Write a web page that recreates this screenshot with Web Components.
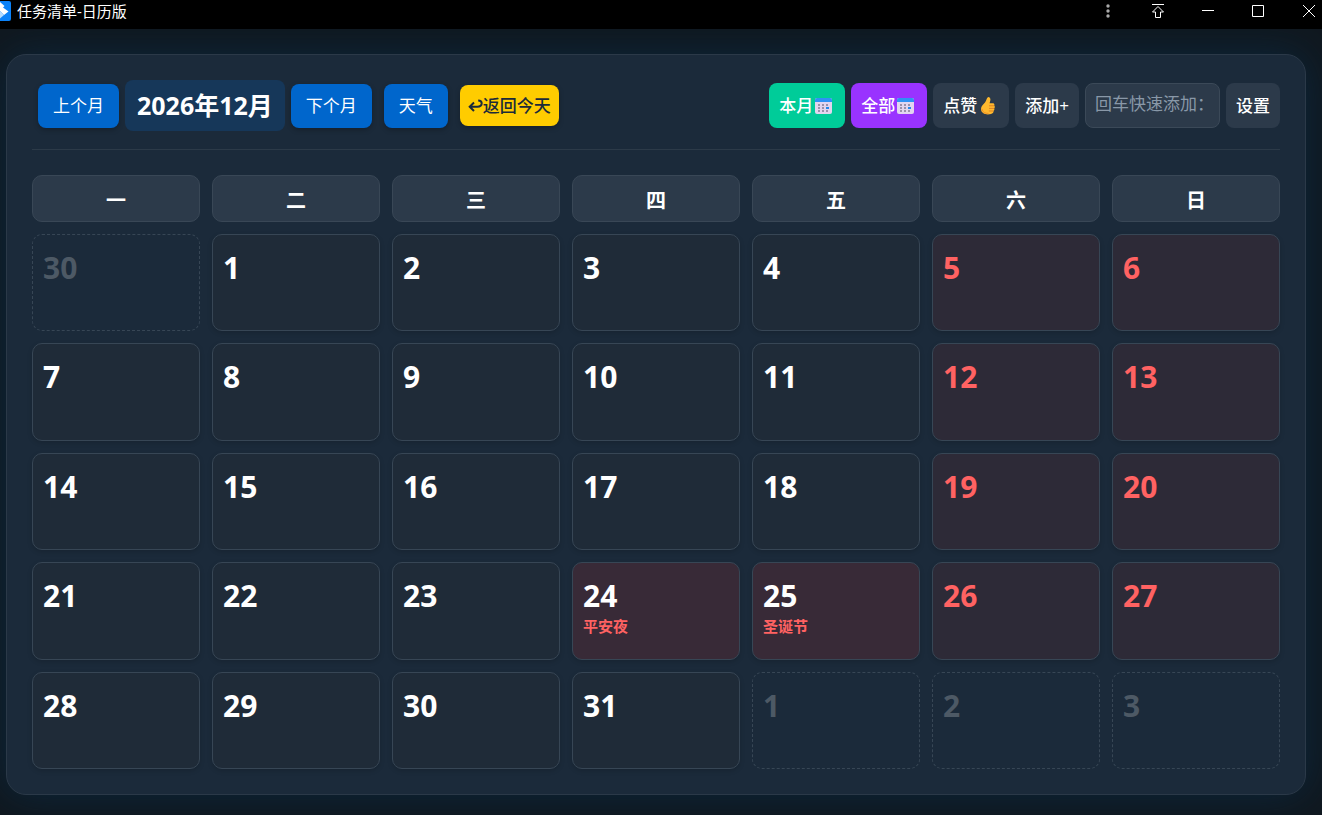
<!DOCTYPE html>
<html lang="zh-CN">
<head>
<meta charset="utf-8">
<title>任务清单-日历版</title>
<style>
  html {
    --text: #fff;
    --panel: #1b2a3a;
    --surface: #2c3a4a;
    --line: #374655;
    --blue: #0066cc;
    --red: #ff6262;
    --radius: 10px;
    color-scheme: dark;
  }

  body {
    margin: 0;
    color: var(--text);
    background: #10181f;
    font: 17px/24px "Open Sans", "Noto Sans CJK SC", sans-serif;
  }
</style>
</head>
<body>
<calendar-app></calendar-app>

<script>
function define (name, html, setup) {
  const template = document.createElement('template')
  template.innerHTML = html
  customElements.define(name, class extends HTMLElement {
    constructor () {
      super()
      this.attachShadow({ mode: 'open' })
      this.shadowRoot.append(template.content.cloneNode(true))
    }

    connectedCallback () {
      if (setup) setup(this, this.shadowRoot)
    }
  })
}

const icons = {
  back: `<svg width="15" height="14" viewBox="0 0 15 14" fill="none" stroke="currentColor" stroke-width="2">
    <path d="M6 3.5L1.7 7.7L6 12M2 7.7H9.3C12 7.7 13.7 6.2 13.7 4.3C13.7 2.6 12.3 1.5 10.2 1.5"/>
  </svg>`,
  calendar: `<svg width="21" height="18" viewBox="0 0 21 18">
    <rect x="1" y="1" width="17" height="16" rx="2" fill="#e2d5ef"/>
    <path d="M1 5V3a2 2 0 0 1 2-2h13a2 2 0 0 1 2 2v2z" fill="#2f92f5"/>
    <path d="M4 7h2v2H4zM8 7h2v2H8zM12 7h2v2h-2zM4 10h2v2H4zM8 10h2v2H8zM4 13h2v2H4zM8 13h2v2H8zM12 13h2v2h-2z" fill="#9b91ab"/>
    <path d="M12 10h3v2h-3z" fill="#2588ee"/>
  </svg>`,
  thumb: `<svg width="21" height="18" viewBox="0 0 21 18">
    <path d="M10.2 0C12 0 12.7 1.5 12.3 3.5L11.6 6.2H14.7C16.2 6.2 16.8 7.5 16.2 8.6C17 9.4 17 10.6 16.2 11.3C16.7 12.2 16.3 13.2 15.5 13.7C15.8 15.4 14.8 16.7 13 16.9C9 18.2 3 17 3 12C3 8.8 5.2 7.6 7 5.4C8.5 3.6 8.4 1 10.2 0z" fill="#ffb92e"/>
    <path d="M11 8.8H16M11 11.4H16M10.8 14H15.3" stroke="#de8122" fill="none"/>
    <path d="M4 12C4.5 15.4 7.4 16.6 10.5 16.4" stroke="#ef8f27" fill="none"/>
  </svg>`
}

define('window-bar', `
<style>
  :host {
    display: flex;
    align-items: center;
    justify-content: space-between;
    height: 29px;
    background: #000;
    font-size: 15px;
    line-height: 22px;
  }

  .title, .controls {
    display: flex;
    align-items: center;
    height: 22px;
    margin-bottom: 7px;
  }

  .title {
    gap: 6px;
  }

  button {
    display: grid;
    place-items: center;
    width: 50px;
    height: 22px;
    padding: 0;
    border: 0;
    color: #fff;
    background: none;
  }

  button:last-child {
    width: 26px;
    margin-left: 13px;
  }

  svg {
    display: block;
  }
</style>
<div class="title">
  <svg width="11" height="20" viewBox="0 0 11 20">
    <path d="M0 0H9Q11 0 11 2V18Q11 20 9 20H0z" fill="#0b82f8"/>
    <path d="M0 1L4.5 5L3 6.5L8.5 10.5L4 14L0 10z" fill="#fff"/>
    <path d="M0 10L4 14L0 17.5z" fill="#b5dcff"/>
  </svg>
  <slot></slot>
</div>
<div class="controls">
  <button aria-label="菜单"><svg width="4" height="14" viewBox="0 0 4 14" fill="#aaa"><circle cx="2" cy="2" r="1.7"/><circle cx="2" cy="7" r="1.7"/><circle cx="2" cy="12" r="1.7"/></svg></button>
  <button aria-label="置顶"><svg width="14" height="15" viewBox="0 0 14 15" fill="none" stroke="currentColor"><path d="M1 .5H13M7 2.5L1.5 8H4.5V13.5H9.5V8H12.5z"/></svg></button>
  <button aria-label="最小化"><svg width="12" height="12" viewBox="0 0 12 12" stroke="currentColor"><path d="M0 5.5H12"/></svg></button>
  <button aria-label="最大化"><svg width="12" height="12" viewBox="0 0 12 12" fill="none" stroke="currentColor"><path d="M.5.5H11.5V11.5H.5z"/></svg></button>
  <button aria-label="关闭"><svg width="12" height="12" viewBox="0 0 12 12" stroke="currentColor"><path d="M0 0L12 12M12 0L0 12"/></svg></button>
</div>
`)

define('tool-button', `
<style>
  :host {
    display: block;
  }

  button {
    display: flex;
    align-items: center;
    gap: 1px;
    box-sizing: border-box;
    height: 45px;
    padding: 0 10px;
    border: 0;
    border-radius: 8px;
    color: var(--text);
    background: var(--surface);
    font: inherit;
    font-weight: 500;
    white-space: nowrap;
  }

  :host([kind=nav]) button {
    height: 44px;
    padding: 0 15px;
    background: var(--blue);
    box-shadow: 0 2px 5px rgba(0, 0, 0, .25);
    font-weight: 400;
  }

  :host([kind=today]) button {
    gap: 0;
    height: 41px;
    padding: 0 8px;
    color: #1b2a3a;
    background: #ffcc00;
    box-shadow: 0 2px 5px rgba(0, 0, 0, .25);
  }

  :host([kind=month]) button { background: #00cc99 }
  :host([kind=all]) button { background: #9933ff }
</style>
<button><slot></slot></button>
`, (host, root) => {
  const svg = icons[host.getAttribute('icon')]
  if (svg) {
    const where = host.getAttribute('kind') === 'today' ? 'afterbegin' : 'beforeend'
    root.querySelector('button').insertAdjacentHTML(where, svg)
  }
})

define('quick-add', `
<style>
  :host {
    display: block;
  }

  input {
    box-sizing: border-box;
    width: 135px;
    height: 45px;
    padding: 0 9px 4px;
    border: 1px solid #3b4958;
    border-radius: 8px;
    color: var(--text);
    background: var(--surface);
    font: inherit;
  }

  input::placeholder {
    color: #8998a8;
  }
</style>
<input type="text" aria-label="快速添加" placeholder="回车快速添加：">
`)

define('calendar-toolbar', `
<style>
  :host {
    display: flex;
    align-items: center;
    justify-content: space-between;
    padding: 0 0 18px 6px;
    border-bottom: 1px solid #2c3a48;
  }

  div {
    display: flex;
    align-items: center;
    gap: 6px;
  }

  .extra {
    gap: 12px;
    margin-left: 6px;
  }

  h1 {
    margin: 0;
    padding: 8px 12px;
    border-radius: 8px;
    background: #163759;
    font-size: 25px;
    line-height: 35px;
    white-space: nowrap;
  }
</style>
<div>
  <tool-button kind="nav">上个月</tool-button>
  <h1>2026年12月</h1>
  <tool-button kind="nav">下个月</tool-button>
  <div class="extra">
    <tool-button kind="nav">天气</tool-button>
    <tool-button kind="today" icon="back">返回今天</tool-button>
  </div>
</div>
<div>
  <tool-button kind="month" icon="calendar">本月</tool-button>
  <tool-button kind="all" icon="calendar">全部</tool-button>
  <tool-button icon="thumb">点赞</tool-button>
  <tool-button>添加+</tool-button>
  <quick-add></quick-add>
  <tool-button>设置</tool-button>
</div>
`)

define('calendar-day', `
<style>
  :host {
    display: block;
    box-sizing: border-box;
    padding: 12px 10px;
    border: 1px solid var(--line);
    border-radius: var(--radius);
    background: #1f2b38;
    box-shadow: 0 2px 5px rgba(0, 0, 0, .15);
  }

  :host([weekend]) {
    color: var(--red);
    background: #2d2a37;
  }

  :host([festival]) {
    background: #382a37;
  }

  :host([outside]) {
    border-style: dashed;
    color: #4d5965;
    background: none;
    box-shadow: none;
  }

  .number {
    font-size: 30px;
    font-weight: 700;
    line-height: 42px;
  }

  .note {
    color: var(--red);
    font-size: 15px;
    font-weight: 700;
    line-height: 18px;
  }
</style>
<div class="number"><slot></slot></div>
<div class="note"></div>
`, (host, root) => {
  root.querySelector('.note').textContent = host.getAttribute('festival') || ''
})

define('calendar-month', `
<style>
  :host {
    display: grid;
    grid-template-columns: repeat(7, minmax(0, 1fr));
    grid-template-rows: 47px;
    grid-auto-rows: minmax(80px, 1fr);
    gap: 12px;
  }

  .weekday {
    box-sizing: border-box;
    padding-top: 13px;
    border: 1px solid #394756;
    border-radius: var(--radius);
    background: var(--surface);
    font-size: 20px;
    font-weight: 700;
    text-align: center;
  }
</style>
`, (host, root) => {
  const festivals = { 24: '平安夜', 25: '圣诞节' }

  for (const name of '一二三四五六日') {
    const head = document.createElement('div')
    head.className = 'weekday'
    head.textContent = name
    root.append(head)
  }

  for (let i = 0; i < 35; i++) {
    const date = new Date(2026, 10, 30 + i)
    const day = document.createElement('calendar-day')
    day.textContent = date.getDate()
    if (date.getMonth() !== 11) {
      day.setAttribute('outside', '')
    } else {
      if (i % 7 > 4) day.setAttribute('weekend', '')
      if (festivals[date.getDate()]) day.setAttribute('festival', festivals[date.getDate()])
    }
    root.append(day)
  }
})

define('calendar-app', `
<style>
  :host {
    display: flex;
    flex-direction: column;
    min-height: 100vh;
  }

  main {
    display: flex;
    flex: 1;
    padding: 25px 16px 20px 6px;
    overflow: hidden;
  }

  section {
    display: flex;
    flex: 1;
    flex-direction: column;
    gap: 25px;
    min-width: 0;
    padding: 25px;
    border: 1px solid #2b3948;
    border-radius: 20px;
    background: var(--panel);
    box-shadow: 0 0 40px rgba(10, 48, 80, .6);
  }

  calendar-month {
    flex: 1;
  }
</style>
<window-bar>任务清单-日历版</window-bar>
<main>
  <section>
    <calendar-toolbar></calendar-toolbar>
    <calendar-month></calendar-month>
  </section>
</main>
`)
</script>
</body>
</html>
